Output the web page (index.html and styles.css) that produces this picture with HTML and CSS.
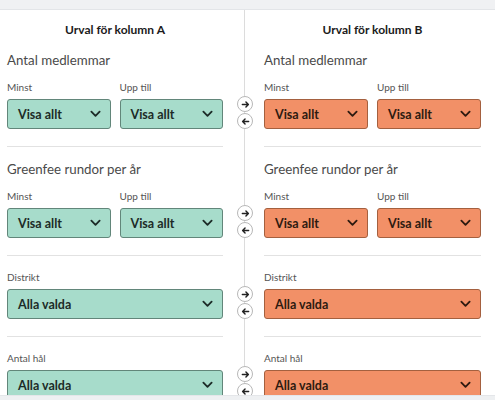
FILE: index.html
```html
<!DOCTYPE html>
<html lang="sv">
<head>
<meta charset="utf-8">
<link rel="stylesheet" href="styles.css">
</head>
<body>
<div class="topbar"></div>
<main class="compare">
  <div class="row head-row">
    <h2 class="col-title">Urval för kolumn A</h2>
    <div class="gutter"></div>
    <h2 class="col-title">Urval för kolumn B</h2>
  </div>

  <div class="row">
    <section class="cell">
      <h3 class="sec-title">Antal medlemmar</h3>
      <div class="pair">
        <div class="field"><span class="lbl">Minst</span><div class="select teal">Visa allt<svg class="chev" viewBox="0 0 12 8"><path d="M1.5 1.5 6 6l4.5-4.5"/></svg></div></div>
        <div class="field"><span class="lbl">Upp till</span><div class="select teal">Visa allt<svg class="chev" viewBox="0 0 12 8"><path d="M1.5 1.5 6 6l4.5-4.5"/></svg></div></div>
      </div>
    </section>
    <div class="gutter">
      <span class="arrow"><svg viewBox="0 0 10 10"><path d="M1.5 5h6.5M5.5 2.3 8.2 5 5.5 7.7"/></svg></span>
      <span class="arrow"><svg viewBox="0 0 10 10"><path d="M8.5 5H2M4.5 2.3 1.8 5l2.7 2.7"/></svg></span>
    </div>
    <section class="cell">
      <h3 class="sec-title">Antal medlemmar</h3>
      <div class="pair">
        <div class="field"><span class="lbl">Minst</span><div class="select orange">Visa allt<svg class="chev" viewBox="0 0 12 8"><path d="M1.5 1.5 6 6l4.5-4.5"/></svg></div></div>
        <div class="field"><span class="lbl">Upp till</span><div class="select orange">Visa allt<svg class="chev" viewBox="0 0 12 8"><path d="M1.5 1.5 6 6l4.5-4.5"/></svg></div></div>
      </div>
    </section>
  </div>

  <div class="row">
    <section class="cell">
      <h3 class="sec-title">Greenfee rundor per år</h3>
      <div class="pair">
        <div class="field"><span class="lbl">Minst</span><div class="select teal">Visa allt<svg class="chev" viewBox="0 0 12 8"><path d="M1.5 1.5 6 6l4.5-4.5"/></svg></div></div>
        <div class="field"><span class="lbl">Upp till</span><div class="select teal">Visa allt<svg class="chev" viewBox="0 0 12 8"><path d="M1.5 1.5 6 6l4.5-4.5"/></svg></div></div>
      </div>
    </section>
    <div class="gutter">
      <span class="arrow"><svg viewBox="0 0 10 10"><path d="M1.5 5h6.5M5.5 2.3 8.2 5 5.5 7.7"/></svg></span>
      <span class="arrow"><svg viewBox="0 0 10 10"><path d="M8.5 5H2M4.5 2.3 1.8 5l2.7 2.7"/></svg></span>
    </div>
    <section class="cell">
      <h3 class="sec-title">Greenfee rundor per år</h3>
      <div class="pair">
        <div class="field"><span class="lbl">Minst</span><div class="select orange">Visa allt<svg class="chev" viewBox="0 0 12 8"><path d="M1.5 1.5 6 6l4.5-4.5"/></svg></div></div>
        <div class="field"><span class="lbl">Upp till</span><div class="select orange">Visa allt<svg class="chev" viewBox="0 0 12 8"><path d="M1.5 1.5 6 6l4.5-4.5"/></svg></div></div>
      </div>
    </section>
  </div>

  <div class="row">
    <section class="cell plain">
      <div class="field"><span class="lbl">Distrikt</span><div class="select teal">Alla valda<svg class="chev" viewBox="0 0 12 8"><path d="M1.5 1.5 6 6l4.5-4.5"/></svg></div></div>
    </section>
    <div class="gutter">
      <span class="arrow"><svg viewBox="0 0 10 10"><path d="M1.5 5h6.5M5.5 2.3 8.2 5 5.5 7.7"/></svg></span>
      <span class="arrow"><svg viewBox="0 0 10 10"><path d="M8.5 5H2M4.5 2.3 1.8 5l2.7 2.7"/></svg></span>
    </div>
    <section class="cell plain">
      <div class="field"><span class="lbl">Distrikt</span><div class="select orange">Alla valda<svg class="chev" viewBox="0 0 12 8"><path d="M1.5 1.5 6 6l4.5-4.5"/></svg></div></div>
    </section>
  </div>

  <div class="row">
    <section class="cell plain">
      <div class="field"><span class="lbl">Antal hål</span><div class="select teal">Alla valda<svg class="chev" viewBox="0 0 12 8"><path d="M1.5 1.5 6 6l4.5-4.5"/></svg></div></div>
    </section>
    <div class="gutter">
      <span class="arrow"><svg viewBox="0 0 10 10"><path d="M1.5 5h6.5M5.5 2.3 8.2 5 5.5 7.7"/></svg></span>
      <span class="arrow"><svg viewBox="0 0 10 10"><path d="M8.5 5H2M4.5 2.3 1.8 5l2.7 2.7"/></svg></span>
    </div>
    <section class="cell plain">
      <div class="field"><span class="lbl">Antal hål</span><div class="select orange">Alla valda<svg class="chev" viewBox="0 0 12 8"><path d="M1.5 1.5 6 6l4.5-4.5"/></svg></div></div>
    </section>
  </div>
</main>
<div class="bottombar"></div>
</body>
</html>
```

FILE: styles.css
```css
* { box-sizing: border-box; }
html, body { margin: 0; padding: 0; }
body {
  width: 495px;
  height: 400px;
  overflow: hidden;
  background: #fff;
  font-family: Lato, "Open Sans", Arial, sans-serif;
  color: #222;
}
.topbar {
  height: 10px;
  background: #f0f1f3;
  border-bottom: 1px solid #e3e5e8;
}
.compare {
  padding-left: 7px;
  background: linear-gradient(#dcdcdc, #dcdcdc) no-repeat 244px 0 / 1px 100%;
}
.row {
  display: grid;
  grid-template-columns: 216px 14px 16px 11px 217px;
}
.row > :nth-child(1) { grid-column: 1; }
.row > :nth-child(2) { grid-column: 3; }
.row > :nth-child(3) { grid-column: 5; }
.head-row { padding-top: 12px; }
.col-title {
  margin: 0;
  font-size: 12px;
  line-height: 16px;
  font-weight: 700;
  text-align: center;
  color: #1b1b1b;
}
.cell {
  padding: 12px 0 17px;
  border-bottom: 1px solid #e2e2e2;
}
.cell.plain { padding-top: 14px; }
.row:last-child .cell { border-bottom: 0; }
.sec-title {
  margin: 0 0 10px;
  font-size: 13.3px;
  line-height: 20px;
  font-weight: 400;
  color: #4a4a4a;
}
.pair {
  display: grid;
  grid-template-columns: 1fr 1fr;
  column-gap: 9px;
}
.field { display: flex; flex-direction: column; }
.lbl {
  font-size: 10px;
  line-height: 14px;
  color: #555;
  margin-bottom: 5px;
}
.select {
  height: 30px;
  display: flex;
  align-items: center;
  justify-content: space-between;
  padding: 0 9px 0 10px;
  border-radius: 3px;
  font-size: 12.5px;
  font-weight: 700;
}
.select.teal {
  background: #a7dccb;
  border: 1px solid #62867a;
  color: #1c2b27;
}
.select.orange {
  background: #f29067;
  border: 1px solid #a4603f;
  color: #2d1a10;
}
.chev {
  width: 11px;
  height: 8px;
  fill: none;
  stroke: currentColor;
  stroke-width: 2;
  stroke-linecap: round;
  stroke-linejoin: round;
}
.gutter {
  display: flex;
  flex-direction: column;
  justify-content: flex-end;
  gap: 1px;
  padding-bottom: 18px;
}
.head-row .gutter { padding: 0; }
.arrow {
  width: 16px;
  height: 16px;
  border-radius: 50%;
  background: #fff;
  border: 1px solid #b8b8b8;
  display: flex;
  align-items: center;
  justify-content: center;
}
.arrow svg {
  width: 9px;
  height: 9px;
  fill: none;
  stroke: #222;
  stroke-width: 1.6;
  stroke-linecap: round;
  stroke-linejoin: round;
}
.bottombar {
  position: fixed;
  left: 0;
  right: 0;
  bottom: 0;
  height: 5px;
  background: #eef0f2;
  border-top: 1px solid #e4e6e9;
}
```
